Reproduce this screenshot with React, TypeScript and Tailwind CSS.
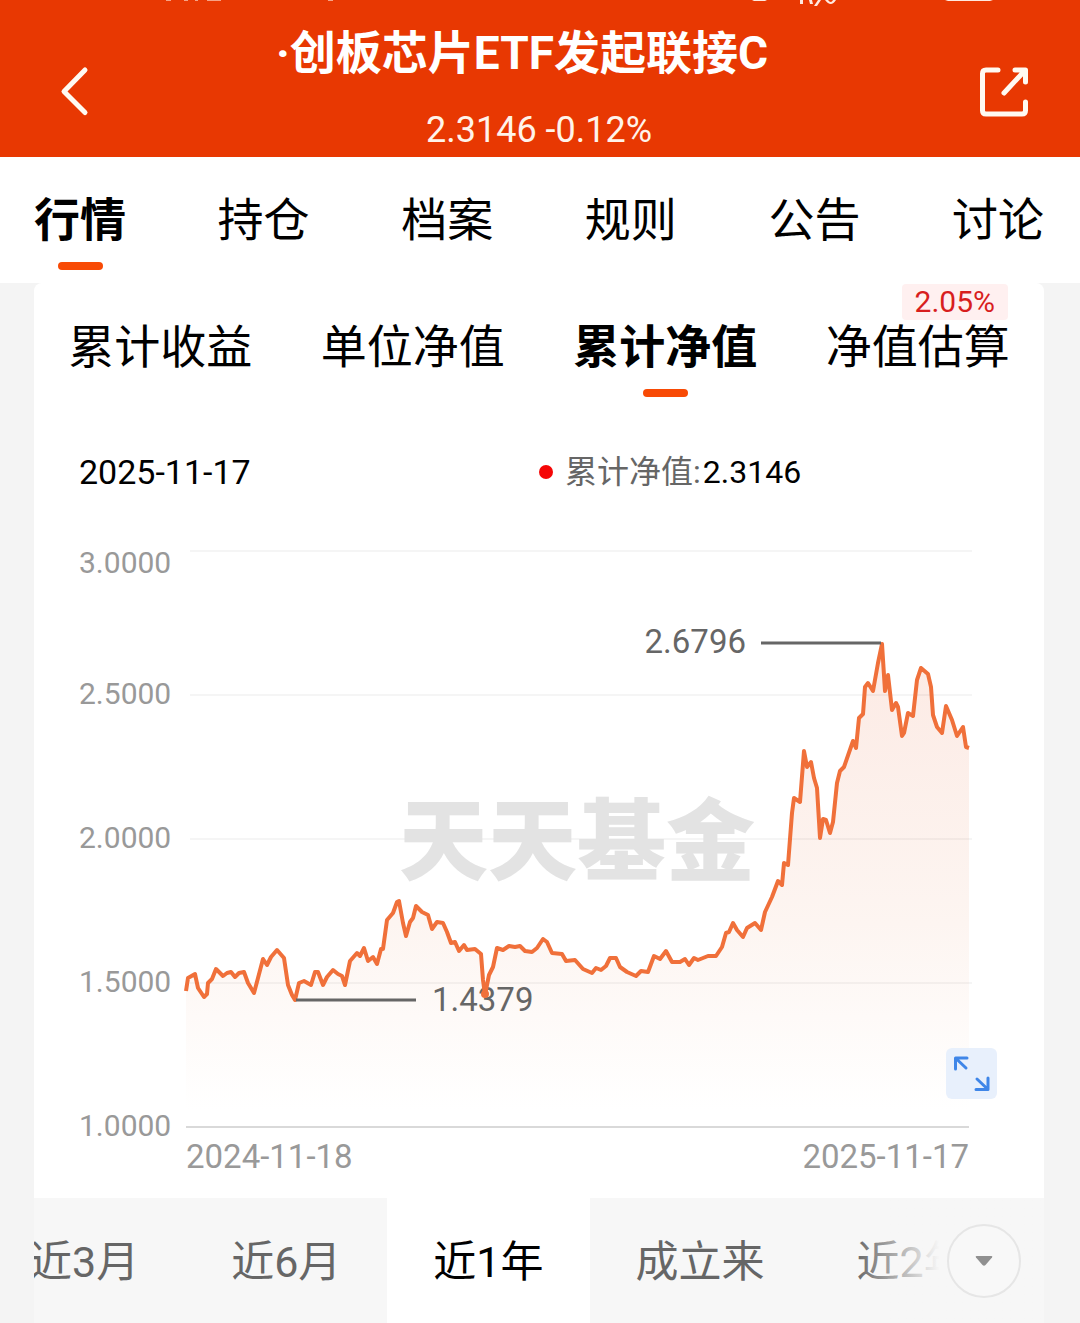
const mainTabs = ["行情", "持仓", "档案", "规则", "公告", "讨论"];

const chartTabs = [
  { label: "累计收益" },
  { label: "单位净值" },
  { label: "累计净值" },
  { label: "净值估算", badge: "2.05%" },
];

const periods = ["近3月", "近6月", "近1年", "成立来", "近2年"];

const yAxis = [
  { label: "3.0000", line: 551, base: 573 },
  { label: "2.5000", line: 695, base: 704 },
  { label: "2.0000", line: 839, base: 848 },
  { label: "1.5000", line: 983, base: 992 },
];

const series =
  "186,991 188,978 195,974 198,988 204,997 207,994 208,983 212,979 216,969 223,976 227,973 231,972 235,977 239,973 244,972 248,983 254,993 258,978 263,959 267,965 271,957 277,950 284,958 288,985 292,995 295,1000 299,983 304,981 311,985 315,972 318,972 323,985 327,977 333,970 338,974 342,976 345,985 350,961 357,953 360,956 364,948 368,961 373,957 377,964 381,949 383,949 387,920 393,913 397,902 399,901 403,923 406,936 410,922 413,918 416,906 422,912 428,915 432,929 437,922 443,923 447,932 451,943 455,942 459,951 464,945 467,950 475,949 481,954 483,980 485,995 489,975 493,967 497,948 503,950 509,946 515,947 520,946 525,951 532,952 537,948 543,939 547,942 552,953 562,954 566,961 575,960 583,969 592,973 596,968 601,970 606,966 610,958 616,958 620,967 627,972 636,976 641,971 648,972 654,956 660,959 666,951 672,962 680,962 685,959 689,965 694,958 698,960 708,956 716,956 722,947 726,933 729,932 733,923 737,930 743,937 747,928 755,923 761,930 765,912 772,897 778,881 782,885 784,863 788,865 792,813 794,798 800,802 804,751 807,767 811,762 814,778 817,788 820,838 823,819 826,820 830,833 833,822 837,783 840,771 844,767 853,741 856,748 859,718 863,714 865,687 868,683 873,691 878,663 882,644 885,691 888,675 892,710 896,703 898,707 902,736 904,733 908,713 913,716 917,680 921,668 928,674 931,687 933,715 937,727 942,733 946,706 952,720 957,736 963,727 966,747 969,748";

function StatusBar() {
  return (
    <div className="absolute inset-x-0 top-0 h-2 overflow-hidden">
      <svg className="h-2 w-full" viewBox="0 0 1080 8" fill="#ffe9df">
        <path d="M166 0h5v1h-5zM184 0h4v1h-4zM195 0h3v1h-3zM207 0h14v1h-14zM328 0h5v1h-5z" opacity="0.6" />
        <path d="M752 0h15l-2 1h-11zM945 0h48l-3 1h-42z" />
        <path d="M800 0h3v4h-3zM809 0h3l1 4h-3zM818 0h3l-4 6h-3zM825 0h3q3 4 5 0h3q-5 8-11 0z" />
      </svg>
    </div>
  );
}

function Header() {
  return (
    <header className="relative flex h-[157px] items-start justify-between bg-[#e83802] px-[50px] text-white">
      <StatusBar />
      <button aria-label="返回" className="mt-[61px]">
        <svg width="50" height="60" viewBox="0 0 50 60" fill="none" stroke="#fffaf2" strokeWidth="5" strokeLinecap="round" strokeLinejoin="round">
          <path d="M35 9 14 30.500l21 21" />
        </svg>
      </button>
      <div className="flex w-[518px] flex-col items-center">
        <h1 className="mt-[21px] flex w-full justify-end pr-[30px] text-[46px] leading-16 font-bold whitespace-nowrap">
          ·创板芯片ETF发起联接C
        </h1>
        <p className="mt-5 text-[36px] leading-[50px] text-[#fff3ea]">2.3146 -0.12%</p>
      </div>
      <button aria-label="分享" className="mt-[61px]">
        <svg width="52" height="60" viewBox="0 0 52 60" fill="none" stroke="#fffaf2" strokeWidth="5" strokeLinecap="round" strokeLinejoin="round">
          <path d="M20 9H8Q4.500 9 4.500 12.500v37Q4.500 53 8 53h36q3.500 0 3.500-3.500V41M37 9h10.500v12M46 10.500 26 32" />
        </svg>
      </button>
    </header>
  );
}

function MainNav() {
  return (
    <nav className="flex h-[126px] items-start justify-between bg-white pt-[33px] pr-9 pl-[34px]">
      {mainTabs.map((tab, i) => (
        <a key={tab} href="#" className="flex flex-col items-center text-[46px] leading-[60px]">
          <span className={i === 0 ? "font-bold" : ""}>{tab}</span>
          {i === 0 && <span className="mt-3 h-2 w-[45px] rounded-full bg-[#f84a05]" />}
        </a>
      ))}
    </nav>
  );
}

function ChartTabs() {
  return (
    <div className="grid h-[114px] grid-cols-4 pt-[34px]">
      {chartTabs.map((tab) => {
        const active = tab.label === "累计净值";
        return (
          <button key={tab.label} className="relative flex flex-col items-center text-[46px] leading-[60px]">
            <span className={active ? "font-bold" : ""}>{tab.label}</span>
            {active && <span className="mt-3 h-2 w-[45px] rounded-full bg-[#f84a05]" />}
            {tab.badge && (
              <span className="absolute -top-[33px] right-9 rounded-sm bg-[#fff0f0] px-[13px] text-[30px] leading-9 text-[#d81e1e]">
                {tab.badge}
              </span>
            )}
          </button>
        );
      })}
    </div>
  );
}

function Legend() {
  return (
    <div className="grid h-[150px] grid-cols-2 items-center text-[32px] leading-10">
      <time className="pl-[45px] text-[34px]">2025-11-17</time>
      <div className="flex items-center">
        <span className="mr-3 size-[14px] rounded-full bg-[#f50606]" />
        <span className="text-[#666]">累计净值:</span>
        <span className="ml-[2px]">2.3146</span>
      </div>
    </div>
  );
}

function Chart() {
  return (
    <div className="relative">
      <svg className="block w-full overflow-visible" viewBox="34 547 1010 651" role="img" aria-label="累计净值">
        <defs>
          <linearGradient id="area" x1="0" y1="643" x2="0" y2="1110" gradientUnits="userSpaceOnUse">
            <stop offset="0" stopColor="#fceae4" />
            <stop offset="0.600" stopColor="#fdf5f1" />
            <stop offset="1" stopColor="#ffffff" />
          </linearGradient>
        </defs>
        <polygon points={`186,1127 ${series} 969,1127`} fill="url(#area)" />
        {yAxis.map((tick) => (
          <g key={tick.label}>
            <path d={`M190 ${tick.line}H972`} stroke="#000" strokeOpacity="0.04" strokeWidth="2" />
            <text x="79" y={tick.base} fontSize="30" fill="#999">{tick.label}</text>
          </g>
        ))}
        <text x="79" y="1136" fontSize="30" fill="#999">1.0000</text>
        <path d="M186 1127H969" stroke="#d9d9d9" strokeWidth="2" />
        <text x="399" y="873" fontSize="89" fontWeight="900" fill="#e3e3e3">天天基金</text>
        <text x="186" y="1168" fontSize="33" fill="#999">2024-11-18</text>
        <text x="969" y="1168" fontSize="33" fill="#999" textAnchor="end">2025-11-17</text>
        <text x="746" y="653" fontSize="33" fill="#666" textAnchor="end">2.6796</text>
        <text x="432" y="1011" fontSize="33" fill="#666">1.4379</text>
        <polyline points={series} fill="none" stroke="#f0703a" strokeWidth="4" strokeLinejoin="round" />
        <circle cx="485" cy="994" r="4" fill="#f0703a" />
        <path d="M761 643H881M296 1000H416" stroke="#666" strokeWidth="3" />
      </svg>
      <button aria-label="全屏" className="absolute right-[47px] bottom-[99px] rounded-md bg-[#e8f0fc]">
        <svg width="51" height="51" viewBox="0 0 51 51" fill="none" stroke="#3f86e8" strokeWidth="3" strokeLinecap="round" strokeLinejoin="round">
          <path d="M21 10H9.500v11M10 10.500 20 20M31 31l10.500 10M42 30v11.500H30" />
        </svg>
      </button>
    </div>
  );
}

function Periods() {
  return (
    <div className="relative h-[125px] overflow-hidden bg-[#f7f7f7]">
      <div className="-ml-[51px] flex h-full">
        {periods.map((p) => (
          <button
            key={p}
            className={`shrink-0 px-[46px] pt-[3px] text-[43px] whitespace-nowrap ${p === "近1年" ? "bg-white text-black" : "text-[#666]"}`}
          >
            {p}
          </button>
        ))}
      </div>
      <div className="absolute inset-y-0 right-0 flex w-[190px] items-center justify-end bg-linear-to-r from-[#f7f7f700] to-[#f7f7f7] to-45% pr-[23px]">
        <button aria-label="更多" className="flex size-[74px] items-center justify-center rounded-full border-2 border-[#e6e6e6] bg-[#f8f8f8]">
          <svg width="20" height="12" viewBox="0 0 20 12" fill="#909090">
            <path d="M2.500 1h15q1.500 0 .5 1.500l-6.500 7.500q-1.500 1.500-3 0L2 2.500Q1 1 2.500 1z" />
          </svg>
        </button>
      </div>
    </div>
  );
}

export default function App() {
  return (
    <div className="min-h-screen bg-[#f4f4f4] font-[Roboto,'Noto_Sans_CJK_SC',sans-serif] text-black">
      <Header />
      <MainNav />
      <main className="mr-9 ml-[34px] overflow-hidden rounded-t-lg bg-white">
        <ChartTabs />
        <Legend />
        <Chart />
        <Periods />
      </main>
    </div>
  );
}
